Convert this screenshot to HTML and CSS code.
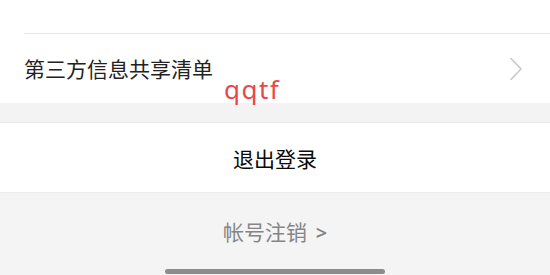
FILE: index.html
```html
<!DOCTYPE html>
<html lang="zh">
<head>
<meta charset="utf-8">
<link rel="stylesheet" href="styles.css">
</head>
<body>
<div class="page">
  <section class="group">
    <div class="top-spacer"><div class="divider"></div></div>
    <div class="row">
      <span class="row-label">第三方信息共享清单</span>
      <svg class="chevron" width="14" height="24" viewBox="0 0 14 24"><path d="M2 1.5 L12 12 L2 22.5" fill="none" stroke="#c8c8c8" stroke-width="1.6" stroke-linecap="round" stroke-linejoin="round"/></svg>
    </div>
  </section>
  <div class="gap"></div>
  <section class="logout">退出登录</section>
  <footer class="footer">
    <div class="cancel">帐号注销 <span class="gt">&gt;</span></div>
    <div class="home-bar"></div>
  </footer>
  <span class="watermark">qqtf</span>
</div>
</body>
</html>
```
FILE: styles.css
```css
html, body {
  margin: 0;
  padding: 0;
}
body {
  background: #f4f4f4;
  font-family: "Noto Sans CJK SC", "Noto Sans", sans-serif;
  width: 550px;
  height: 275px;
  overflow: hidden;
}
.page {
  position: relative;
  width: 550px;
  height: 275px;
}
.group {
  background: #ffffff;
}
.top-spacer {
  height: 34px;
  display: flex;
  align-items: flex-end;
}
.divider {
  margin-left: 24px;
  flex: 1;
  height: 1px;
  background: #e6e6e6;
}
.row {
  height: 69px;
  display: flex;
  align-items: center;
  justify-content: space-between;
  padding: 0 27px 0 24px;
}
.row-label {
  font-size: 21px;
  color: #222222;
  line-height: 1;
}
.chevron {
  display: block;
}
.gap {
  height: 19px;
  background: #f3f3f3;
  border-bottom: 1px solid #e9e9e9;
}
.logout {
  height: 69px;
  background: #ffffff;
  display: flex;
  align-items: center;
  justify-content: center;
  font-size: 21px;
  color: #0a0a0a;
  border-bottom: 1px solid #ececec;
}
.footer {
  display: flex;
  flex-direction: column;
  align-items: center;
}
.cancel {
  margin-top: 24px;
  line-height: 28px;
  height: 28px;
  font-size: 21px;
  color: #858585;
}
.gt {
  font-family: "Noto Sans", sans-serif;
  font-size: 20px;
  font-weight: 600;
  margin-left: 4px;
}
.home-bar {
  margin-top: 24px;
  width: 220px;
  height: 5px;
  border-radius: 3px;
  background: #8c8c8c;
}
.watermark {
  position: absolute;
  left: 224px;
  top: 76px;
  font-family: "Noto Sans", sans-serif;
  font-size: 26px;
  line-height: 26px;
  letter-spacing: 1.5px;
  color: #e8474b;
}
```
